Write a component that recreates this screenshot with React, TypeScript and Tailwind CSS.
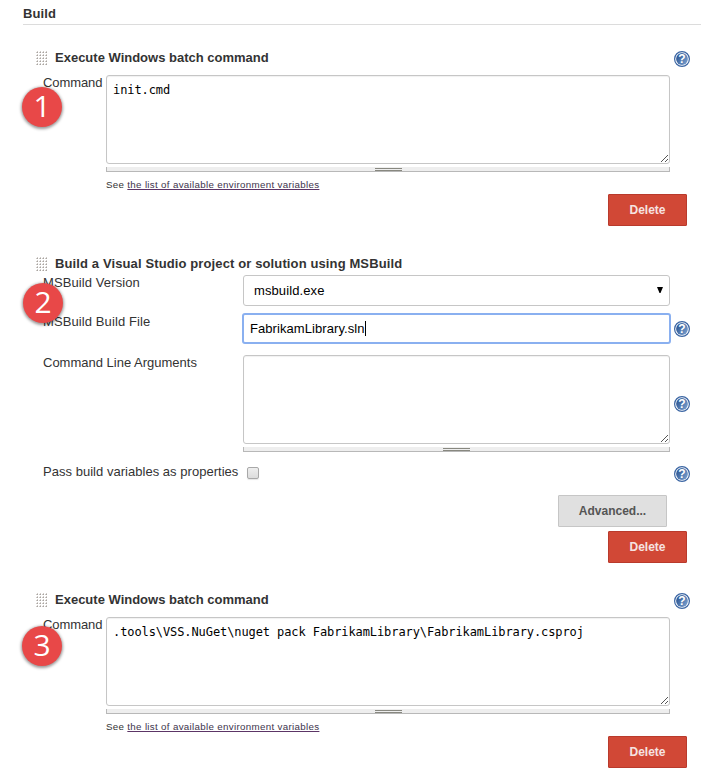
import type { ReactNode } from "react";

function Grip() {
  return (
    <svg width="12" height="15" viewBox="0 0 12 15" className="block shrink-0" shapeRendering="crispEdges">
      {[0, 3, 6, 9, 12].map((y) =>
        [0, 3, 6, 9].map((x) => (
          <g key={`${x}-${y}`}>
            <rect x={x} y={y + 1} width="2" height="1" fill="#cfcbc8" />
            <rect x={x + 1} y={y} width="1" height="1" fill="#cfcbc8" />
            <rect x={x + 1} y={y + 1} width="1" height="1" fill="#a8a4a0" />
          </g>
        )),
      )}
    </svg>
  );
}

function Help() {
  return (
    <svg width="16" height="16" viewBox="0 0 16 16" className="block shrink-0">
      <defs>
        <linearGradient id="disc" x1="0" y1="0" x2="1" y2="0.6">
          <stop offset="0" stopColor="#1f4a8a" />
          <stop offset="1" stopColor="#7399c9" />
        </linearGradient>
      </defs>
      <circle cx="8" cy="8" r="7.4" fill="#fff" stroke="#3a65a3" strokeWidth="1.2" />
      <circle cx="8" cy="8" r="5.9" fill="url(#disc)" />
      <text x="8" y="12.3" textAnchor="middle" fill="#fff" className="font-['Liberation_Sans',Arial,sans-serif] text-[12px] font-bold">?</text>
    </svg>
  );
}

function Badge({ n, className }: { n: string; className: string }) {
  return (
    <div
      className={`absolute flex size-10 items-center justify-center rounded-full bg-[#e84848] font-['Open_Sans',sans-serif] text-[30px] leading-none text-white shadow-[0_1px_3px_1px_rgba(0,0,0,0.4)] ${className}`}
    >
      <span className="-mt-0.5">{n}</span>
    </div>
  );
}

function Title({ children, help, className = "" }: { children: ReactNode; help?: boolean; className?: string }) {
  return (
    <div className="flex h-4 items-center pl-9">
      <Grip />
      <h2 className={`ml-[7px] flex-1 text-[13px] leading-4 font-bold whitespace-nowrap ${className}`}>{children}</h2>
      {help && <div className="mr-7 pt-px"><Help /></div>}
    </div>
  );
}

function TextArea({ value }: { value?: string }) {
  return (
    <div className="flex-1">
      <div className="flex h-[89px] items-end justify-between rounded-[3px] border border-[#c6c6c6] bg-white shadow-[inset_0_1px_1px_rgba(0,0,0,0.06)]">
        <div className="self-start pt-[7px] pl-1.5 font-['DejaVu_Sans_Mono',monospace] text-[12px] leading-[15px] tracking-[-0.09px] whitespace-pre text-black">
          {value}
        </div>
        <svg width="9" height="9" viewBox="0 0 9 9" className="shrink-0" shapeRendering="crispEdges">
          {[0, 1, 2, 3, 4, 5, 6].map((i) => (
            <rect key={i} x={1 + i} y={7 - i} width="1" height="1" fill="#555" />
          ))}
          {[0, 1, 2].map((i) => (
            <rect key={i} x={5 + i} y={7 - i} width="1" height="1" fill="#555" />
          ))}
        </svg>
      </div>
      <div className="mt-[3px] flex h-[5px] justify-center border-r border-b border-l border-[#b8b8b8] bg-[#eee]">
        <div className="mt-px h-[3px] w-[27px] border-y border-[#888880]" />
      </div>
    </div>
  );
}

function DeleteButton() {
  return (
    <div className="flex justify-end pr-[31px]">
      <button className="h-8 w-[79px] rounded-[1px] border border-[#b93a2c] bg-[#d14836] text-[12px] font-bold text-[#f6e3e1]">
        Delete
      </button>
    </div>
  );
}

function BatchStep({ n, command, badge }: { n: string; command: string; badge: string }) {
  return (
    <section className="relative h-[177px]">
      <Title help>Execute Windows batch command</Title>
      <div className="mt-[9px] flex pr-12 pl-[43px]">
        <div className="w-[63px] text-[13px] leading-4 tracking-[-0.1px]">Command</div>
        <TextArea value={command} />
      </div>
      <p className="mt-[7px] h-3 pl-[106px] text-[9.75px] leading-3 tracking-[0.32px] whitespace-nowrap">
        See{" "}
        <a className="text-[#40344c] underline decoration-[#5c3566] decoration-1 underline-offset-[1px] [text-decoration-skip-ink:none]">
          the list of available environment variables
        </a>
      </p>
      <div className="mt-[3px]">
        <DeleteButton />
      </div>
      <Badge n={n} className={badge} />
    </section>
  );
}

function Label({ children }: { children: ReactNode }) {
  return <div className="w-[200px] shrink-0 text-[13px] leading-4 whitespace-nowrap">{children}</div>;
}

export default function App() {
  return (
    <main className="h-[784px] w-[718px] overflow-hidden bg-white font-['Liberation_Sans',Arial,sans-serif] text-[#333]">
      <h1 className="mr-[17px] ml-[23px] h-[25px] border-b border-[#dcdcdc] pt-1.5 text-[13px] leading-4 font-bold tracking-[0.1px]">Build</h1>
      <div className="h-[25px]" />
      <BatchStep n="1" command="init.cmd" badge="top-[37px] left-[22px]" />

      <section className="relative mt-[29px] h-[307px]">
        <Title className="tracking-[0.12px]">Build a Visual Studio project or solution using MSBuild</Title>
        <div className="mt-[3px] flex pl-[43px]">
          <Label><span className="tracking-[0.1px]">MSBuild Version</span></Label>
          <div className="flex h-[31px] w-[427px] items-center justify-between rounded-[3px] border border-[#c6c6c6] pr-1.5 pl-2.5 text-[13px] tracking-[0.1px] text-black">
            <span>msbuild.exe</span>
            <svg width="6" height="6" viewBox="0 0 6 6" className="-mt-0.5"><path d="M0 0H6L3.5 6H2.5Z" fill="#000" /></svg>
          </div>
        </div>
        <div className="mt-[7px] flex pl-[43px]">
          <div className="w-[199px] shrink-0 pt-px text-[13px] leading-4 tracking-[0.1px]">MSBuild Build File</div>
          <div className="flex h-[31px] w-[429px] items-center rounded-[3px] border-2 border-[#8ab0f0] pl-1.5 text-[13px] tracking-[0.07px] text-black">
            FabrikamLibrary.sln
            <span className="h-[15px] w-px bg-black" />
          </div>
          <div className="mt-2 ml-[3px]"><Help /></div>
        </div>
        <div className="mt-[11px] flex pl-[43px]">
          <Label>Command Line Arguments</Label>
          <TextArea />
          <div className="mt-[41px] mr-7 ml-1"><Help /></div>
        </div>
        <div className="mt-3 flex h-[31px] pr-7 pl-[43px]">
          <div className="w-[204px] text-[13px] leading-4 tracking-[0.03px] whitespace-nowrap">Pass build variables as properties</div>
          <div className="mt-[3px] size-3 rounded-[2px] border border-[#a8a8a8] bg-linear-to-b from-[#eee] to-[#dcdcdc] shadow-[0_1px_1px_rgba(0,0,0,0.1)]" />
          <div className="mt-0.5 ml-auto"><Help /></div>
        </div>
        <div className="flex justify-end pr-[51px]">
          <button className="h-8 w-[109px] rounded-[1px] border border-[#c6c6c6] bg-[#e0e0e0] text-[12px] font-bold text-[#555]">Advanced...</button>
        </div>
        <div className="mt-1">
          <DeleteButton />
        </div>
        <Badge n="2" className="top-[27px] left-[23px]" />
      </section>

      <div className="h-[29px]" />
      <BatchStep n="3" command={".tools\\VSS.NuGet\\nuget pack FabrikamLibrary\\FabrikamLibrary.csproj"} badge="top-[34px] left-[22px]" />
    </main>
  );
}
